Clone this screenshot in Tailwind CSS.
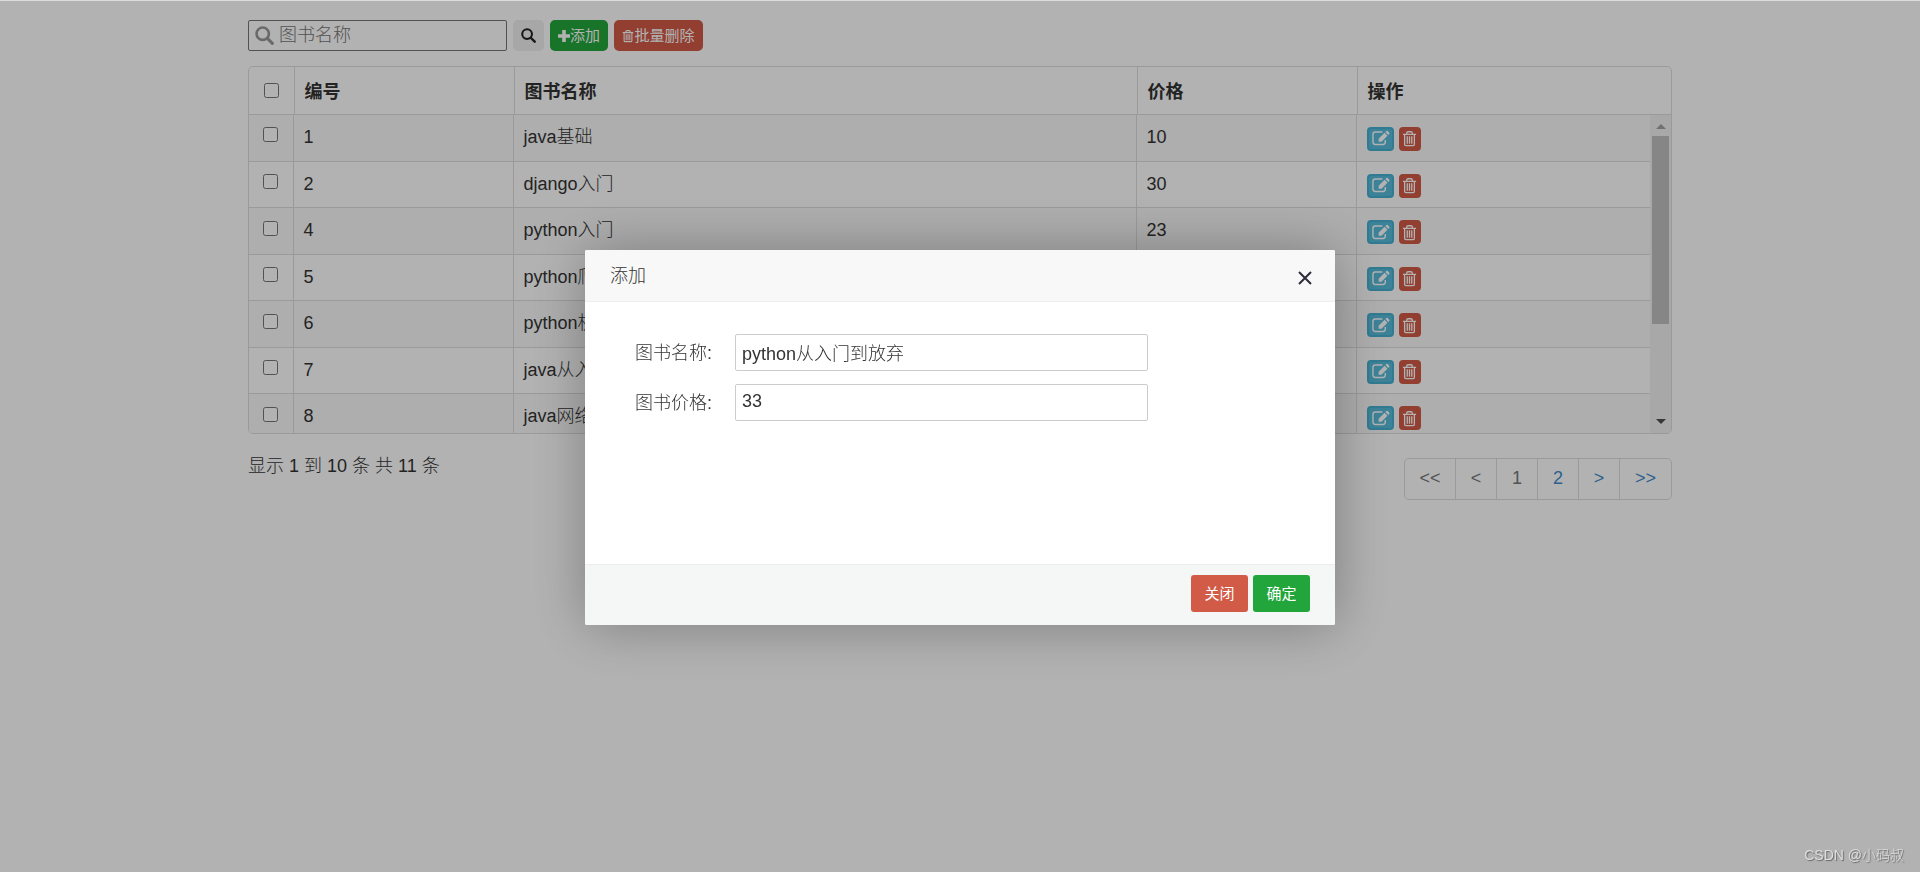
<!DOCTYPE html>
<html lang="zh-CN">
<head>
<meta charset="utf-8">
<meta name="viewport" content="width=device-width, initial-scale=1">
<title>图书管理</title>
<script src="https://cdn.jsdelivr.net/npm/@tailwindcss/browser@4"></script>
</head>
<body class="min-h-screen border-t border-[#dcdcdc] bg-white font-['Liberation_Sans','Noto_Sans_CJK_SC',sans-serif] text-[18px] leading-6 font-light text-[#333]">
<svg class="hidden">
  <symbol id="search" viewBox="0 0 16 16"><circle cx="6.5" cy="6.5" r="5.2" fill="none" stroke="currentColor" stroke-width="2.2"/><path d="M10.4 10.4 14.6 14.6" stroke="currentColor" stroke-width="2.6" stroke-linecap="round"/></symbol>
  <symbol id="trash" viewBox="0 0 16 18"><path d="M1 4.500h14M5 4.500V3.300Q5 1.800 6.500 1.800h3Q11 1.800 11 3.300V4.500M2.800 4.500v10.700q0 1.300 1.300 1.300h7.800q1.300 0 1.300-1.300V4.500M5.600 6.500v8M8 6.500v8M10.400 6.500v8" fill="none" stroke="currentColor" stroke-width="1.400"/></symbol>
  <symbol id="edit" viewBox="0 0 20 18"><path d="M12 2.200H4.500Q2 2.200 2 4.700v8.100q0 2.500 2.500 2.500h8.100q2.500 0 2.500-2.500V10.500" fill="none" stroke="currentColor" stroke-width="1.500"/><path d="M8 12.500V9.300l6.300-6.300 3.100 3.100-6.300 6.400zM15.100 2.200l1.100-1.100q.7-.6 1.400 0l1.700 1.700q.6.700 0 1.400l-1.100 1.100z" fill="currentColor"/></symbol>
</svg>

<main class="mx-auto w-full max-w-[1424px] pt-[19px]">
  <form class="flex h-[31px] items-stretch gap-[6px]">
    <label class="flex w-[259px] items-center gap-[5px] rounded-[2px] border border-[#767676] pl-[6px]">
      <svg class="size-[19px] shrink-0 text-[#999]"><use href="#search"/></svg>
      <input type="text" aria-label="图书名称" placeholder="图书名称" class="w-full min-w-0 bg-transparent pb-[2px] leading-6 outline-none placeholder:text-[#757575]">
    </label>
    <button type="button" aria-label="搜索" class="flex w-[31px] items-center justify-center rounded-[5px] bg-[#efefef] text-[#222]"><svg class="size-[15px]"><use href="#search"/></svg></button>
    <button type="button" class="flex w-[58px] items-center justify-center rounded-[5px] bg-[#22a63b] text-[15px] font-normal text-white"><svg class="size-[12px] shrink-0" viewBox="0 0 12 12"><path d="M6 0v12M0 6h12" stroke="currentColor" stroke-width="3.600"/></svg>添加</button>
    <button type="button" class="flex w-[89px] items-center justify-center rounded-[5px] bg-[#d15b47] text-[15px] font-normal text-white"><svg class="h-[14px] w-[12px] shrink-0" viewBox="0 0 16 18"><use href="#trash"/></svg>批量删除</button>
  </form>

  <section class="mt-[15px] overflow-hidden rounded-[5px] border border-[#ddd]">
    <table class="w-full table-fixed text-left">
      <colgroup><col class="w-[45px]"><col class="w-[220px]"><col><col class="w-[220px]"><col class="w-[314px]"></colgroup>
      <thead>
        <tr class="h-[47px] border-b border-[#ddd]">
          <th class="border-r border-[#ddd]"><input type="checkbox" aria-label="全选" class="mx-auto block size-[15px]"></th>
          <th class="border-r border-[#ddd] px-[10px] pt-1">编号</th>
          <th class="border-r border-[#ddd] px-[10px] pt-1">图书名称</th>
          <th class="border-r border-[#ddd] px-[10px] pt-1">价格</th>
          <th class="px-[10px] pt-1">操作</th>
        </tr>
      </thead>
    </table>
    <div class="flex h-[318px] overflow-hidden">
      <div class="min-w-0 flex-1">
        <table class="w-full table-fixed text-left">
          <colgroup><col class="w-[44px]"><col class="w-[220px]"><col><col class="w-[220px]"><col class="w-[294px]"></colgroup>
          <tbody id="books"></tbody>
        </table>
      </div>
      <div class="flex w-[21px] flex-col items-center justify-between bg-[#f1f1f1] py-[9px]" aria-hidden="true">
        <div class="flex flex-col items-center gap-[7px]">
          <svg class="h-[5px] w-[10px]" viewBox="0 0 10 5"><path d="M0 5 5 0l5 5z" fill="#a3a3a3"/></svg>
          <div class="h-[188px] w-[17px] bg-[#c1c1c1]"></div>
        </div>
        <svg class="h-[5px] w-[10px]" viewBox="0 0 10 5"><path d="M0 0l5 5 5-5z" fill="#505050"/></svg>
      </div>
    </div>
  </section>

  <footer class="flex items-start justify-between">
    <p class="pt-5">显示 1 到 10 条 共 11 条</p>
    <nav aria-label="分页" class="mt-6 flex h-[42px] divide-x divide-[#ddd] rounded-[5px] border border-[#ddd] leading-[38px] text-[#428bca]">
      <a href="#" class="w-[51px] text-center text-[#777]">&lt;&lt;</a>
      <a href="#" class="w-[41px] text-center text-[#777]">&lt;</a>
      <a href="#" class="w-[41px] text-center text-[#777]">1</a>
      <a href="#" class="w-[41px] text-center">2</a>
      <a href="#" class="w-[41px] text-center">&gt;</a>
      <a href="#" class="w-[51px] text-center">&gt;&gt;</a>
    </nav>
  </footer>
</main>

<div class="fixed inset-x-0 top-px bottom-0 flex items-center justify-center bg-black/30 pt-[2px]">
  <div role="dialog" aria-labelledby="dialog-title" class="flex min-h-[375px] w-full max-w-[750px] flex-col overflow-hidden rounded-[2px] bg-white shadow-[1px_1px_55px_rgba(0,0,0,0.3)]">
    <header class="flex h-[52px] items-center justify-between border-b border-[#eee] bg-[#f8f8f8] pr-[22px] pl-[25px]">
      <h2 id="dialog-title">添加</h2>
      <button type="button" aria-label="关闭窗口" class="pt-1"><svg class="size-[16px]" viewBox="0 0 16 16"><path d="M2 2l12 12M14 2 2 14" stroke="#2e2d3c" stroke-width="2"/></svg></button>
    </header>
    <form class="flex flex-1 flex-col gap-[13px] pt-8 pl-[50px]">
      <div class="flex items-center"><label for="name" class="w-[100px]">图书名称:</label><input id="name" type="text" value="python从入门到放弃" class="h-[37px] w-[413px] rounded-[2px] border border-[#ccc] px-[6px] pb-[2px]"></div>
      <div class="flex items-center"><label for="price" class="w-[100px]">图书价格:</label><input id="price" type="text" value="33" class="h-[37px] w-[413px] rounded-[2px] border border-[#ccc] px-[6px] pb-[2px]"></div>
    </form>
    <div class="flex h-[61px] items-start justify-end gap-[5px] border-t border-[#e9eeed] bg-[#f5f7f6] pt-[10px] pr-[25px] text-[15px] font-normal text-white">
      <button type="button" class="h-[37px] w-[57px] rounded-[3px] bg-[#d15b47]">关闭</button>
      <button type="button" class="h-[37px] w-[57px] rounded-[3px] bg-[#22a63b]">确定</button>
    </div>
  </div>
</div>
<p class="fixed right-4 bottom-[5px] text-[14px] text-[#dedede] [text-shadow:1px_1px_1px_#666]">CSDN @小码叔</p>

<script>
const books = [[1,'java基础',10],[2,'django入门',30],[4,'python入门',23],[5,'python爬虫',35],[6,'python机器学习',40],[7,'java从入门到精通',45],[8,'java网络编程',50]];
document.getElementById('books').innerHTML = books.map(([id, name, price]) => `
  <tr class="h-[46px] border-b border-[#ddd] odd:h-[47px] odd:bg-[#f9f9f9]">
    <td class="border-r border-[#ddd] pb-[6px]"><input type="checkbox" aria-label="选择 ${id}" class="mx-auto block size-[15px]"></td>
    <td class="border-r border-[#ddd] px-[10px] pb-[2px]">${id}</td>
    <td class="truncate border-r border-[#ddd] px-[10px] pb-[2px]">${name}</td>
    <td class="border-r border-[#ddd] px-[10px] pb-[2px]">${price}</td>
    <td class="px-[10px]"><div class="flex gap-[5px] pt-[2px] text-white">
      <button type="button" aria-label="编辑" class="flex h-6 w-[27px] items-center justify-center rounded-[4px] border-2 border-[#46b0d0] bg-[#57bbda]"><svg class="h-[17px] w-[19px] shrink-0" viewBox="0 0 20 18"><use href="#edit"/></svg></button>
      <button type="button" aria-label="删除" class="flex h-6 w-[22px] items-center justify-center rounded-[4px] bg-[#d15b47]"><svg class="h-[17px] w-[15px] shrink-0" viewBox="0 0 16 18"><use href="#trash"/></svg></button>
    </div></td>
  </tr>`).join('');
</script>
</body>
</html>
